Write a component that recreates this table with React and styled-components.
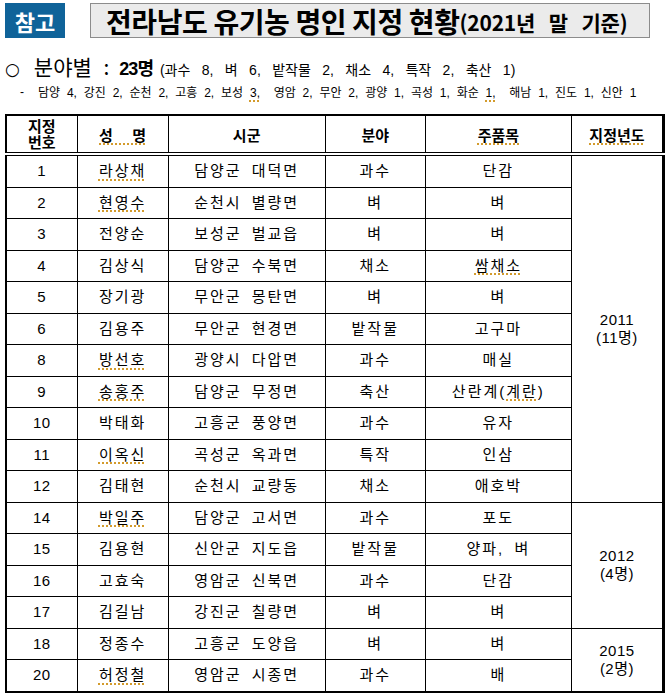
import React from "react";
import styled, { createGlobalStyle } from "styled-components";

const Global = createGlobalStyle`
  html, body { margin: 0; padding: 0; background: #fff; }
  body { font-family: "Liberation Sans", "Noto Sans CJK KR", sans-serif; color: #000; }
`;

const Page = styled.div`
  width: 672px;
  height: 694px;
  padding: 3px 0 0 5px;
  box-sizing: border-box;
  overflow: hidden;
`;

const Header = styled.div`
  display: flex;
  gap: 25px;
  height: 35px;
`;

const Tag = styled.div`
  width: 60px;
  background: #0f6399;
  color: #fff;
  font-family: "Noto Sans CJK KR", sans-serif;
  font-weight: 700;
  font-size: 22px;
  line-height: 1;
  display: flex;
  align-items: center;
  justify-content: center;
`;

const TitleBox = styled.div`
  width: 560px;
  box-sizing: border-box;
  background: #ebebeb;
  border: 1px solid #8c8c8c;
  display: flex;
  align-items: center;
  padding-left: 15px;
  font-family: "Noto Sans CJK KR", sans-serif;
  font-weight: 700;
  white-space: nowrap;
`;

const TitleMain = styled.span`
  font-size: 28px;
  line-height: 1;
  word-spacing: 0px;
  letter-spacing: -0.4px;
`;

const TitleSub = styled.span`
  font-size: 21px;
  line-height: 1;
  word-spacing: 9px;
  letter-spacing: -0.2px;
  padding-top: 3px;
`;

const Summary = styled.div`
  margin-top: 13px;
  height: 28px;
  display: flex;
  align-items: baseline;
  white-space: nowrap;
`;

const Circle = styled.span`
  font-family: "DejaVu Sans", sans-serif;
  font-size: 17px;
  margin-right: 14px;
`;

const SumLabel = styled.span`
  font-family: "Noto Sans CJK KR", sans-serif;
  font-size: 21px;
  word-spacing: 7px;
`;

const SumCount = styled.span`
  font-family: "Liberation Sans", "Noto Sans CJK KR", sans-serif;
  font-size: 18px;
  font-weight: 700;
  letter-spacing: -1px;
  margin-left: 10px;
`;

const SumDetail = styled.span`
  font-size: 14px;
  word-spacing: 7.5px;
  margin-left: 7px;
`;

const Detail = styled.div`
  padding-left: 15px;
  height: 25px;
  font-size: 12px;
  white-space: nowrap;
  display: flex;
  align-items: center;
`;

const Dash = styled.span`
  margin-right: 14px;
`;

const DetailText = styled.span`
  word-spacing: 3.5px;
`;

const Spell = styled.span`
  text-decoration-line: underline;
  text-decoration-style: dotted;
  text-decoration-color: #d39b2c;
  text-decoration-thickness: 2px;
  text-underline-offset: 3px;
`;

const Table = styled.table`
  margin-top: 10px;
  width: 660px;
  border-collapse: collapse;
  table-layout: fixed;
  border-top: 2px solid #000;
  border-bottom: 2px solid #000;
  border-left: 2px solid #000;
  border-right: 3px solid #000;
`;

const Th = styled.th`
  height: 36px;
  padding: 0;
  border: 1px solid #000;
  border-bottom: 4px double #000;
  font-family: "Noto Sans CJK KR", sans-serif;
  font-weight: 700;
  font-size: 15px;
  line-height: 15px;
  text-align: center;
  vertical-align: middle;
  word-spacing: ${(p) => (p.$wide ? "16px" : "0")};
`;

const Stack = styled.span`
  display: inline-block;
  line-height: 16px;
  letter-spacing: 0;
`;

const Td = styled.td`
  height: 30.5px;
  padding: 0;
  border: 1px solid #000;
  font-size: 15px;
  line-height: 18px;
  text-align: center;
  vertical-align: middle;
  letter-spacing: ${(p) => (p.$num ? "0.5px" : "2px")};
  word-spacing: ${(p) => (p.$num ? "0" : "4px")};
  white-space: nowrap;
`;

const YearTd = styled(Td)`
  letter-spacing: 0.5px;
  line-height: 18px;
`;

const rows = [
  ["1", "라상채", "담양군 대덕면", "과수", "단감", { n: 1 }],
  ["2", "현영수", "순천시 별량면", "벼", "벼", { n: 1 }],
  ["3", "전양순", "보성군 벌교읍", "벼", "벼", {}],
  ["4", "김상식", "담양군 수북면", "채소", "쌈채소", { p: 1 }],
  ["5", "장기광", "무안군 몽탄면", "벼", "벼", {}],
  ["6", "김용주", "무안군 현경면", "밭작물", "고구마", {}],
  ["8", "방선호", "광양시 다압면", "과수", "매실", { n: 1 }],
  ["9", "송홍주", "담양군 무정면", "축산", "산란계(계란)", { n: 1, egg: 1 }],
  ["10", "박태화", "고흥군 풍양면", "과수", "유자", {}],
  ["11", "이옥신", "곡성군 옥과면", "특작", "인삼", { n: 1 }],
  ["12", "김태현", "순천시 교량동", "채소", "애호박", {}],
  ["14", "박일주", "담양군 고서면", "과수", "포도", { n: 1 }],
  ["15", "김용현", "신안군 지도읍", "밭작물", "양파, 벼", {}],
  ["16", "고효숙", "영암군 신북면", "과수", "단감", {}],
  ["17", "김길남", "강진군 칠량면", "벼", "벼", {}],
  ["18", "정종수", "고흥군 도양읍", "벼", "벼", {}],
  ["20", "허정철", "영암군 시종면", "과수", "배", { n: 1 }],
];

const years = {
  0: { span: 11, y: "2011", c: "(11명)" },
  11: { span: 4, y: "2012", c: "(4명)" },
  15: { span: 2, y: "2015", c: "(2명)" },
};

function Product({ text, f }) {
  if (f.egg) {
    return (
      <>
        산란계(<Spell>계란</Spell>)
      </>
    );
  }
  if (f.p) return <Spell>{text}</Spell>;
  return text;
}

export default function App() {
  return (
    <>
      <Global />
      <Page>
        <Header>
          <Tag>참고</Tag>
          <TitleBox>
            <TitleMain>전라남도 유기농 명인 지정 현황</TitleMain>
            <TitleSub>(2021년 말 기준)</TitleSub>
          </TitleBox>
        </Header>
        <Summary>
          <Circle>○</Circle>
          <SumLabel>분야별 :</SumLabel>
          <SumCount>23명</SumCount>
          <SumDetail>(과수 8, 벼 6, 밭작물 2, 채소 4, 특작 2, 축산 1)</SumDetail>
        </Summary>
        <Detail>
          <Dash>-</Dash>
          <DetailText>
            담양 4, 강진 2, 순천 2, 고흥 2, 보성 <Spell>3,</Spell>&nbsp; 영암 2, 무안 2, 광양 1, 곡성 1, 화순{" "}
            <Spell>1,</Spell>&nbsp; 해남 1, 진도 1, 신안 1
          </DetailText>
        </Detail>
        <Table>
          <colgroup>
            <col style={{ width: 71 }} />
            <col style={{ width: 91 }} />
            <col style={{ width: 157 }} />
            <col style={{ width: 100 }} />
            <col style={{ width: 146 }} />
            <col style={{ width: 92 }} />
          </colgroup>
          <thead>
            <tr>
              <Th>
                <Stack>
                  지정
                  <br />
                  번호
                </Stack>
              </Th>
              <Th $wide>
                <Spell>성 명</Spell>
              </Th>
              <Th>시군</Th>
              <Th>분야</Th>
              <Th>
                <Spell>주품목</Spell>
              </Th>
              <Th>
                <Spell>지정년도</Spell>
              </Th>
            </tr>
          </thead>
          <tbody>
            {rows.map(([no, name, area, field, prod, f], i) => (
              <tr key={no}>
                <Td $num>{no}</Td>
                <Td>{f.n ? <Spell>{name}</Spell> : name}</Td>
                <Td>{area}</Td>
                <Td>{field}</Td>
                <Td>
                  <Product text={prod} f={f} />
                </Td>
                {years[i] && (
                  <YearTd rowSpan={years[i].span}>
                    {years[i].y}
                    <br />
                    {years[i].c}
                  </YearTd>
                )}
              </tr>
            ))}
          </tbody>
        </Table>
      </Page>
    </>
  );
}
